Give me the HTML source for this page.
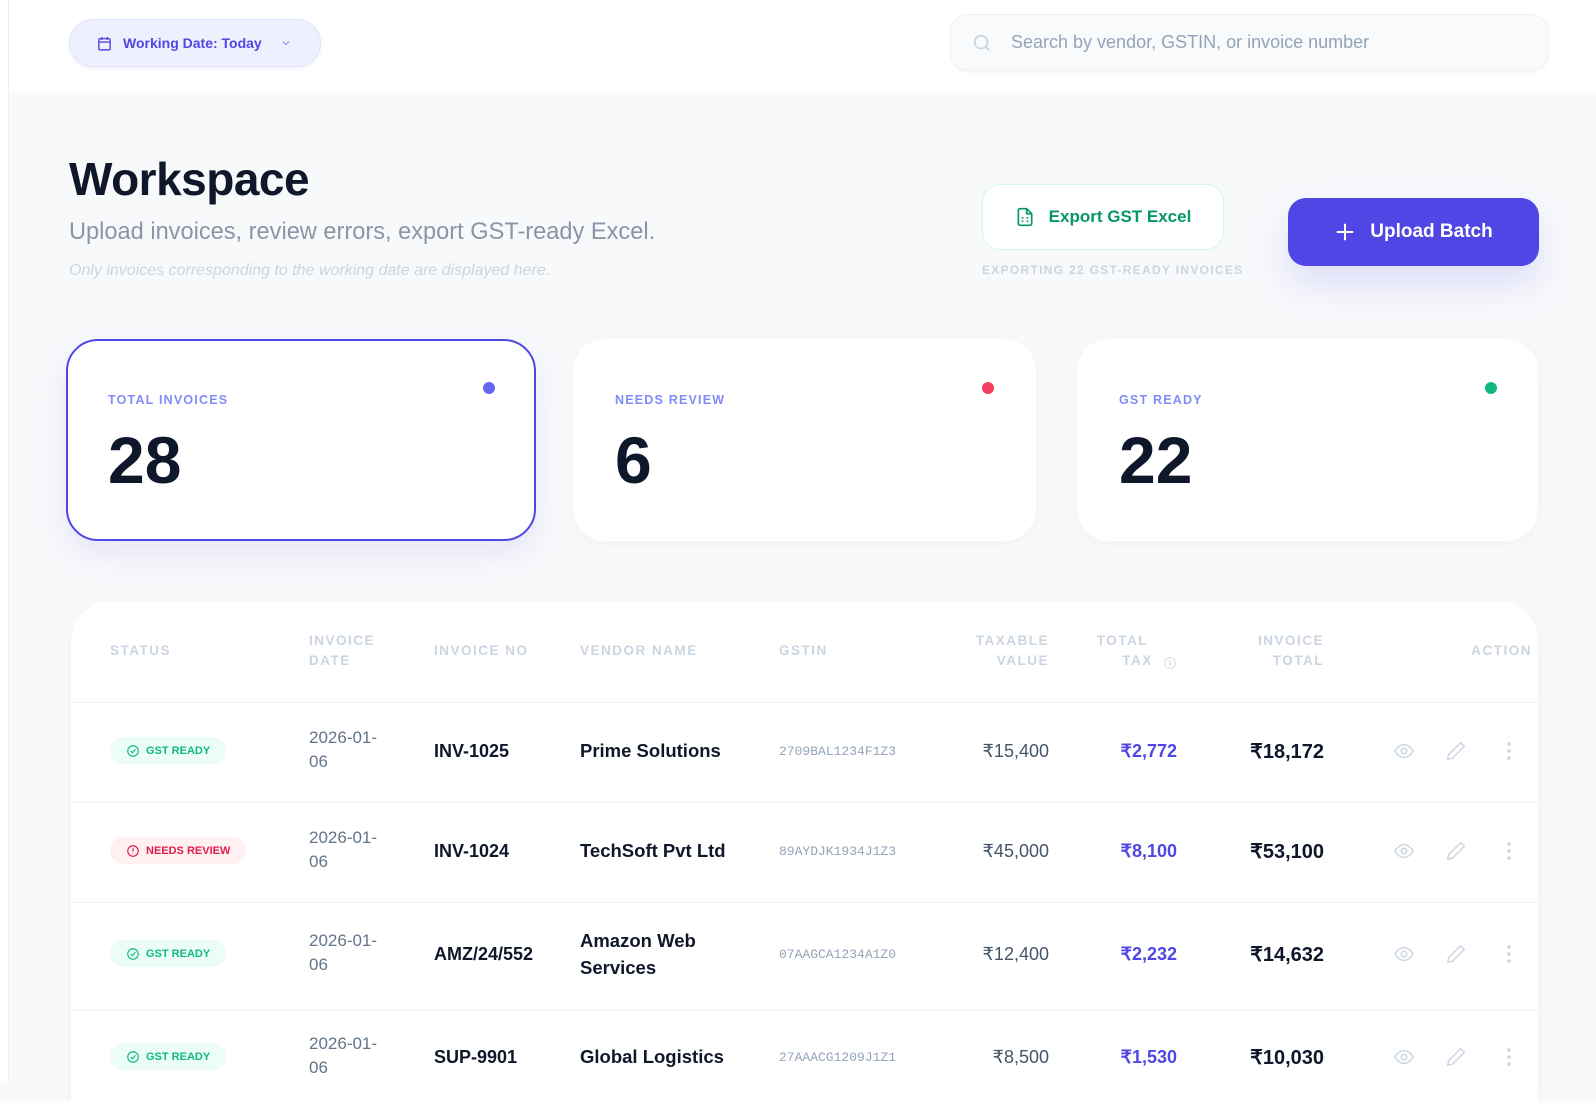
<!DOCTYPE html>
<html><head><meta charset="utf-8"><style>
*{box-sizing:border-box;margin:0;padding:0}
body{width:1596px;height:1083px;overflow:hidden;background:#f8f9fb;font-family:"Liberation Sans",Arial,sans-serif;position:relative}
.abs{position:absolute}
.side{left:0;top:0;width:9px;height:1083px;background:#fff;border-right:1px solid #eceff3}
.head{left:9px;top:0;width:1587px;height:92px;background:#fff}
.pill{left:69px;top:19px;width:252px;height:48px;border-radius:24px;background:#eef0fd;border:1px solid #dfe3fa;box-shadow:0 2px 4px rgba(79,70,229,.08);display:flex;align-items:center;padding-left:26px;color:#4f46e5;font-weight:700;font-size:14px}
.search{left:950px;top:14px;width:599px;height:57px;border-radius:18px;background:#f8fafc;border:1px solid #eef1f5;box-shadow:0 2px 4px rgba(0,0,0,.03);display:flex;align-items:center;padding-left:20px;color:#94a3b8;font-size:18px}
h1{position:absolute;left:69px;top:152px;font-size:46px;font-weight:700;color:#0f172a;letter-spacing:-.5px}
.sub{left:69px;top:219px;font-size:23.6px;color:#8b95a7}
.note{left:69px;top:262px;font-size:16px;font-style:italic;color:#cbd5e1}
.exp{left:982px;top:184px;width:242px;height:66px;border-radius:18px;background:#fff;border:1.5px solid #d1fae5;display:flex;align-items:center;justify-content:center;gap:14px;color:#059669;font-weight:700;font-size:17px}
.expn{left:982px;top:263px;font-size:12px;font-weight:700;letter-spacing:1.3px;color:#cbd5e1}
.up{left:1288px;top:198px;width:251px;height:68px;border-radius:18px;background:#4f46e5;display:flex;align-items:center;justify-content:center;gap:14px;color:#fff;font-weight:700;font-size:19px;box-shadow:0 18px 36px rgba(99,102,241,.18)}
.card{top:339px;height:202px;background:#fff;border-radius:32px;box-shadow:0 4px 14px rgba(15,23,42,.03)}
.card .lb{position:absolute;left:42px;top:54px;font-size:12.5px;font-weight:700;letter-spacing:1.2px;color:#818cf8}
.card .n{position:absolute;left:42px;top:83px;font-size:66px;font-weight:700;color:#0f172a}
.card .d{position:absolute;top:43px;width:12px;height:12px;border-radius:50%}
.tbl{left:71px;top:601px;width:1467px;height:500px;background:#fff;border-radius:40px 40px 0 0;box-shadow:0 4px 14px rgba(15,23,42,.03)}
.th{position:absolute;font-size:13.5px;font-weight:700;letter-spacing:1.5px;color:#cbd5e1;line-height:20px}
.r{text-align:right}
.line{position:absolute;left:0;width:1467px;height:1px;background:#f1f3f6}
.c{position:absolute;font-size:18px;line-height:24px}
.dt{color:#64748b;font-size:17px}
.no{color:#0f172a;font-weight:700}
.vn{color:#0f172a;font-weight:700;font-size:18.5px}
.gs{font-family:"Liberation Mono",monospace;font-size:13px;color:#94a3b8}
.tv{color:#475569}
.tx{color:#4f46e5;font-weight:700}
.tt{color:#0f172a;font-weight:700;font-size:20px}
.badge{position:absolute;height:27px;border-radius:14px;display:flex;align-items:center;gap:6px;padding:0 16px;font-size:11px;font-weight:700}
.ok{background:#ecfdf5;color:#10b981}
.bad{background:#fff1f2;color:#e11d48}
</style></head><body>
<div class="abs side"></div>
<div class="abs head"></div>
<div class="abs pill"><svg width="17" height="17" viewBox="0 0 24 24" fill="none" stroke="#4f46e5" stroke-width="2"><rect x="4" y="5" width="16" height="16" rx="2"/><path d="M8 3v4M16 3v4M4 10h16"/></svg><span style="margin-left:10px">Working Date: Today</span><svg style="margin-left:18px" width="12" height="12" viewBox="0 0 24 24" fill="none" stroke="#818cf8" stroke-width="2"><path d="M6 9l6 6 6-6"/></svg></div>
<div class="abs search"><svg width="22" height="22" viewBox="0 0 24 24" fill="none" stroke="#cbd5e1" stroke-width="2"><circle cx="11" cy="11" r="7"/><path d="M16 16l4 4"/></svg><span style="margin-left:18px">Search by vendor, GSTIN, or invoice number</span></div>
<h1>Workspace</h1>
<div class="abs sub">Upload invoices, review errors, export GST-ready Excel.</div>
<div class="abs note">Only invoices corresponding to the working date are displayed here.</div>
<div class="abs exp"><svg width="20" height="22" viewBox="0 0 24 24" fill="none" stroke="#059669" stroke-width="2"><path d="M14 2H6a2 2 0 0 0-2 2v16a2 2 0 0 0 2 2h12a2 2 0 0 0 2-2V8z"/><path d="M14 2v6h6M8 13h2M14 13h2M8 17h2M14 17h2"/></svg>Export GST Excel</div>
<div class="abs expn">EXPORTING 22 GST-READY INVOICES</div>
<div class="abs up"><svg width="22" height="22" viewBox="0 0 24 24" fill="none" stroke="#fff" stroke-width="2.2"><path d="M12 3v18M3 12h18"/></svg>Upload Batch</div>

<div class="abs card" style="left:66px;width:470px;border:2px solid #4f46e5;box-shadow:0 14px 30px rgba(79,70,229,.1)"><div class="lb" style="left:40px;top:52px">TOTAL INVOICES</div><div class="n" style="left:40px;top:81px">28</div><div class="d" style="left:415px;top:41px;background:#6366f1"></div></div>
<div class="abs card" style="left:573px;width:463px"><div class="lb">NEEDS REVIEW</div><div class="n">6</div><div class="d" style="left:409px;background:#f43f5e"></div></div>
<div class="abs card" style="left:1077px;width:461px"><div class="lb">GST READY</div><div class="n">22</div><div class="d" style="left:408px;background:#10b981"></div></div>

<div class="abs tbl">
<div class="th" style="left:39px;top:40px">STATUS</div>
<div class="th" style="left:238px;top:30px">INVOICE<br>DATE</div>
<div class="th" style="left:363px;top:40px">INVOICE NO</div>
<div class="th" style="left:509px;top:40px">VENDOR NAME</div>
<div class="th" style="left:708px;top:40px">GSTIN</div>
<div class="th r" style="right:489px;top:30px">TAXABLE<br>VALUE</div>
<div class="th r" style="right:390px;top:30px">TOTAL</div>
<div class="th r" style="right:362px;top:50px">TAX <span style="display:inline-block;width:12px;height:12px;border:1px solid #dbe1e8;border-radius:50%;font-size:8px;text-align:center;line-height:11px;letter-spacing:0;vertical-align:-1px;margin-left:6px">i</span></div>
<div class="th r" style="right:214px;top:30px">INVOICE<br>TOTAL</div>
<div class="th r" style="right:6px;top:40px">ACTION</div>
<div class="line" style="top:101px"></div>
<div class="line" style="top:201px"></div>
<div class="line" style="top:301px"></div>
<div class="line" style="top:409px"></div>
</div>

<div id="rows"></div>
<script>
const rows=[
[751,'ok','GST READY','INV-1025','Prime Solutions','2709BAL1234F1Z3','₹15,400','₹2,772','₹18,172'],
[851,'bad','NEEDS REVIEW','INV-1024','TechSoft Pvt Ltd','89AYDJK1934J1Z3','₹45,000','₹8,100','₹53,100'],
[954,'ok','GST READY','AMZ/24/552','Amazon Web<br>Services','07AAGCA1234A1Z0','₹12,400','₹2,232','₹14,632'],
[1057,'ok','GST READY','SUP-9901','Global Logistics','27AAACG1209J1Z1','₹8,500','₹1,530','₹10,030']];
let h='';
for(const r of rows){const y=r[0];
const ic=r[1]=='ok'?'<svg width="14" height="14" viewBox="0 0 24 24" fill="none" stroke="#10b981" stroke-width="2"><circle cx="12" cy="12" r="9"/><path d="M8 12l3 3 5-6"/></svg>':'<svg width="14" height="14" viewBox="0 0 24 24" fill="none" stroke="#e11d48" stroke-width="2"><circle cx="12" cy="12" r="9"/><path d="M12 7v6M12 16v1"/></svg>';
h+=`<div class="badge ${r[1]}" style="left:110px;top:${y-14}px">${ic}${r[2]}</div>
<div class="c dt" style="left:309px;top:${y-25}px">2026-01-<br>06</div>
<div class="c no" style="left:434px;top:${y-12}px">${r[3]}</div>
<div class="c vn" style="left:580px;top:${y-(r[4].includes('<br>')?27:14)}px;line-height:27px">${r[4]}</div>
<div class="c gs" style="left:779px;top:${y-11}px">${r[5]}</div>
<div class="c tv r" style="right:547px;top:${y-12}px">${r[6]}</div>
<div class="c tx r" style="right:419px;top:${y-12}px">${r[7]}</div>
<div class="c tt r" style="right:272px;top:${y-11}px">${r[8]}</div>
<svg class="abs" style="left:1393px;top:${y-11}px" width="22" height="22" viewBox="0 0 24 24" fill="none" stroke="#cbd5e1" stroke-width="1.6"><path d="M2 12s4-7 10-7 10 7 10 7-4 7-10 7S2 12 2 12z"/><circle cx="12" cy="12" r="3"/></svg>
<svg class="abs" style="left:1445px;top:${y-11}px" width="22" height="22" viewBox="0 0 24 24" fill="none" stroke="#cbd5e1" stroke-width="1.6"><path d="M17 3l4 4L8 20l-5 1 1-5z"/></svg>
<svg class="abs" style="left:1506px;top:${y-10}px" width="6" height="20" viewBox="0 0 6 20" fill="#cbd5e1"><circle cx="3" cy="3" r="1.8"/><circle cx="3" cy="10" r="1.8"/><circle cx="3" cy="17" r="1.8"/></svg>`;}
document.getElementById('rows').innerHTML=h;
</script>
</body></html>
